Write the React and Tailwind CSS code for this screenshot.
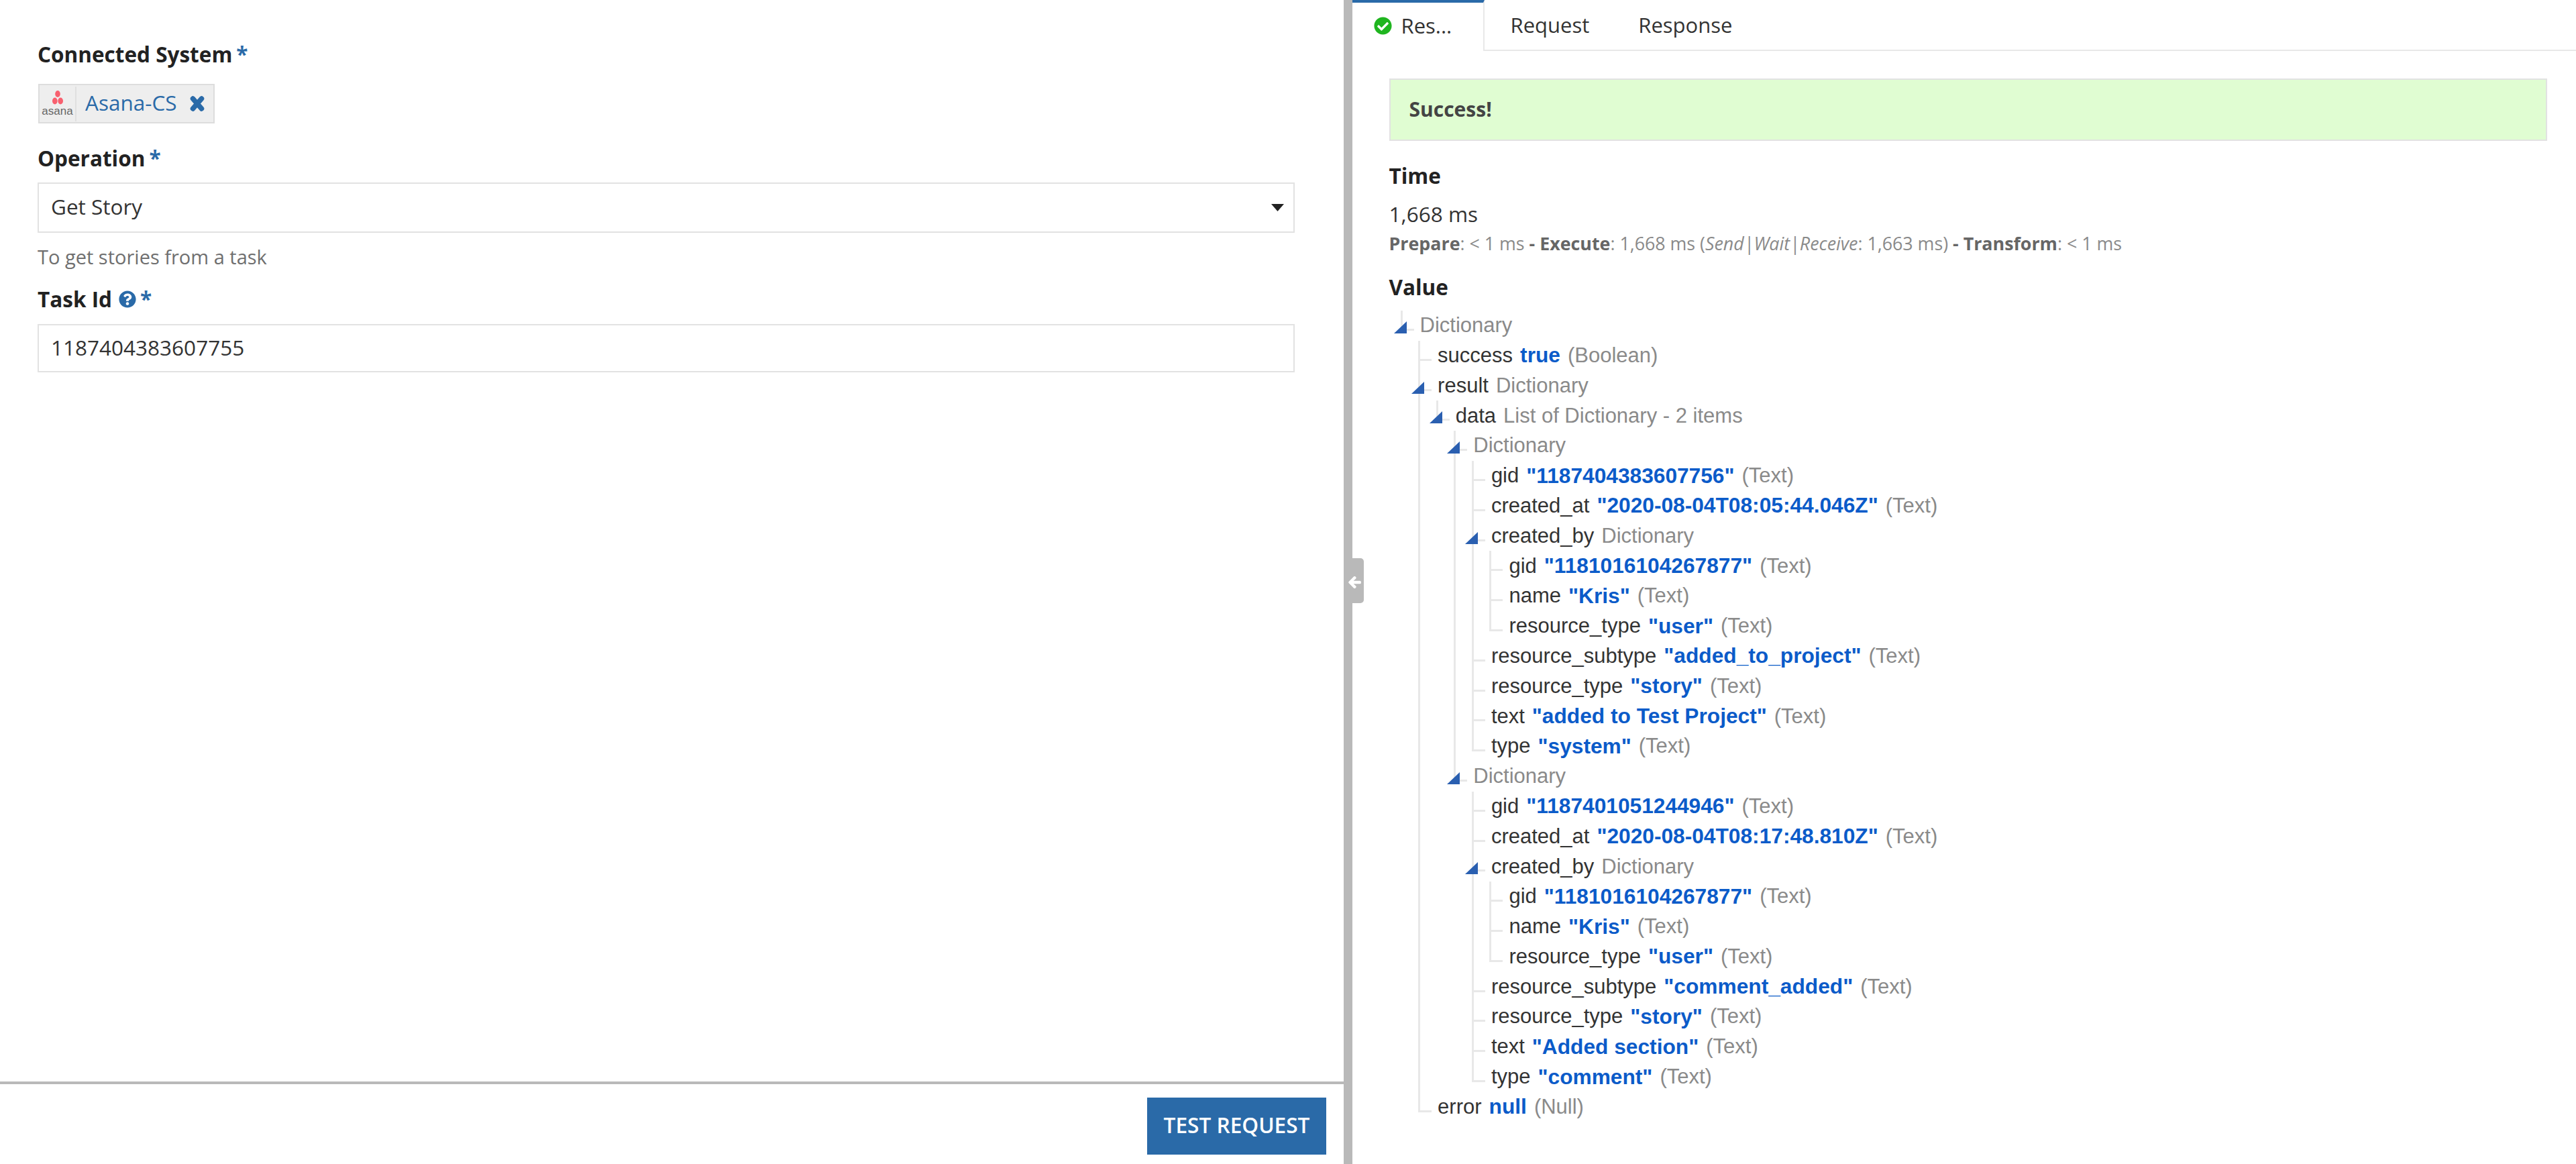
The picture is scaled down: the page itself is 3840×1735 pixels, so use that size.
import React from "react";
import { FaQuestionCircle, FaCheckCircle, FaArrowLeft } from "react-icons/fa";

function Tri() {
  return (
    <svg className="absolute left-[-10px] top-[16px] w-[19px] h-[18px]" viewBox="0 0 19 18">
      <polygon points="19,0 19,18 0,18" fill="#2a5fb0" />
    </svg>
  );
}

function Node({ k, v, t, kids, last }) {
  return (
    <li className="relative">
      <div className={`absolute left-0 top-0 w-[3px] bg-[#e8e8e8] ${last ? "h-[30px]" : "h-full"}`} />
      <div className="absolute left-0 top-[27px] w-[20px] h-[3px] bg-[#e8e8e8]" />
      {kids && <Tri />}
      <div className="h-[44.8px] pl-[29px] flex items-center gap-[11px] whitespace-pre">
        {k && <span className="text-[#333333]">{k}</span>}
        {v && <span className="font-bold text-[31.7px] text-[#0b5bc9]">{v}</span>}
        {t && <span className="text-[#8a8a8a]">{t}</span>}
      </div>
      {kids && (
        <ul className="ml-[26.6px]">
          {kids.map((c, i) => (
            <Node key={i} {...c} last={i === kids.length - 1} />
          ))}
        </ul>
      )}
    </li>
  );
}

const txt = (k, v) => ({ k, v: `"${v}"`, t: "(Text)" });
const story = (gid, at, sub, text, type) => ({
  t: "Dictionary",
  kids: [
    txt("gid", gid),
    txt("created_at", at),
    {
      k: "created_by",
      t: "Dictionary",
      kids: [txt("gid", "1181016104267877"), txt("name", "Kris"), txt("resource_type", "user")],
    },
    txt("resource_subtype", sub),
    txt("resource_type", "story"),
    txt("text", text),
    txt("type", type),
  ],
});

const tree = {
  t: "Dictionary",
  kids: [
    { k: "success", v: "true", t: "(Boolean)" },
    {
      k: "result",
      t: "Dictionary",
      kids: [
        {
          k: "data",
          t: "List of Dictionary - 2 items",
          kids: [
            story("1187404383607756", "2020-08-04T08:05:44.046Z", "added_to_project", "added to Test Project", "system"),
            story("1187401051244946", "2020-08-04T08:17:48.810Z", "comment_added", "Added section", "comment"),
          ],
        },
      ],
    },
    { k: "error", v: "null", t: "(Null)" },
  ],
};

const Star = () => <span className="text-[#2a6aa8] ml-[6px]">*</span>;
const Label = ({ children, className = "" }) => (
  <div className={`h-[44px] pb-[3px] text-[31.5px] font-bold text-[#222222] flex items-center ${className}`}>{children}</div>
);

export default function App() {
  return (
    <div className="w-[3840px] h-[1735px] flex bg-white overflow-hidden font-['Open_Sans',sans-serif] text-[#333333]">
      <div className="w-[2003px] h-full flex flex-col">
        <div className="flex-1 pl-[56px] pr-[73px] pt-[60px]">
          <Label>Connected System<Star /></Label>
          <div className="mt-[21px] ml-[1px] w-[263px] h-[59px] border-2 border-[#dddddd] bg-[#eeeeee] flex items-center">
            <div className="w-[55px] h-[52px] border-r-2 border-[#e0e0e0] flex flex-col items-center justify-center shrink-0">
              <svg className="w-[16px] h-[21px]" viewBox="0 0 16 21">
                <ellipse cx="8" cy="5" rx="3.8" ry="5" fill="#f8606f" />
                <ellipse cx="3.8" cy="15.5" rx="3.8" ry="5" fill="#f8606f" />
                <ellipse cx="12.2" cy="15.5" rx="3.8" ry="5" fill="#f8606f" />
              </svg>
              <span className="text-[17px] leading-[19px] text-[#666666] font-['Liberation_Sans',sans-serif]">asana</span>
            </div>
            <span className="ml-[13px] text-[31.5px] text-[#2a6aa8] pb-[4px]">Asana-CS</span>
            <svg className="ml-[19px] w-[22px] h-[25px]" viewBox="0 0 22 25">
              <path d="M4.5 5 L17.5 20 M17.5 5 L4.5 20" stroke="#2a6aa8" strokeWidth="7.5" strokeLinecap="round" fill="none" />
            </svg>
          </div>
          <Label className="mt-[31px]">Operation<Star /></Label>
          <div className="mt-[13px] h-[75px] border-2 border-[#e2e2e2] pl-[18px] pr-[14px] pb-[4px] flex items-center justify-between text-[31.5px]">
            <span>Get Story</span>
            <svg className="w-[19px] h-[11px] mt-[4px]" viewBox="0 0 19 11"><polygon points="0,0 19,0 9.5,11" fill="#222222" /></svg>
          </div>
          <div className="mt-[15px] h-[44px] pb-[3px] flex items-center text-[29px] text-[#6f6f6f]">To get stories from a task</div>
          <Label className="mt-[19px]">
            Task Id
            <FaQuestionCircle className="ml-[10px] w-[26px] h-[26px] text-[#2a6aa8]" />
            <span className="text-[#2a6aa8] ml-[6px]">*</span>
          </Label>
          <div className="mt-[14px] h-[72px] border-2 border-[#e2e2e2] pl-[18px] pb-[3px] flex items-center text-[31.5px]">1187404383607755</div>
        </div>
        <div className="h-[123px] border-t-4 border-[#b9b9b9] flex justify-end pt-[20px] pr-[26px]">
          <button className="w-[267px] h-[85px] pb-[3px] bg-[#2a6aa8] text-white text-[31.6px] font-semibold">TEST REQUEST</button>
        </div>
      </div>

      <div className="relative w-[12.5px] h-full bg-[#b9b9b9] shrink-0">
        <div className="absolute left-[12px] top-[832px] w-[18px] h-[67px] bg-[#b9b9b9] rounded-r-[5px]" />
        <FaArrowLeft className="absolute left-[6px] top-[858px] w-[21px] h-[20px] text-white" stroke="currentColor" strokeWidth={30} />
      </div>

      <div className="flex-1 min-w-0">
        <div className="h-[76px] flex border-b-2 border-[#e8e8e8] text-[31px]">
          <div className="w-[197px] h-[76px] border-t-4 border-t-[#2a6aa8] border-r-2 border-r-[#e8e8e8] bg-white flex items-center pl-[32px] pb-[3px]">
            <FaCheckCircle className="w-[27px] h-[27px] text-[#1fb51f]" />
            <span className="ml-[14px]">Res...</span>
          </div>
          <div className="flex items-center pl-[39px]">Request</div>
          <div className="flex items-center pl-[73px]">Response</div>
        </div>
        <div className="pl-[55px] pr-[43px]">
          <div className="mt-[41px] h-[93px] pb-[3px] border-2 border-[#e2e2e2] bg-[#e0fdd2] flex items-center pl-[28px] text-[30px] font-bold text-[#444444]">Success!</div>
          <div className="mt-[31px] h-[44px] pb-[3px] flex items-center text-[31.5px] font-bold text-[#222222]">Time</div>
          <div className="mt-[13px] h-[44px] pb-[3px] flex items-center text-[31.5px]">1,668 ms</div>
          <div className="h-[44px] pb-[3px] flex items-center mt-[1px] text-[26.8px] text-[#8a8a8a] whitespace-pre">
            <span>
              <b className="text-[#666666]">Prepare</b>: &lt; 1 ms <b className="text-[#666666]">- Execute</b>: 1,668 ms (<i>Send|Wait|Receive</i>: 1,663 ms) <b className="text-[#666666]">- Transform</b>: &lt; 1 ms
            </span>
          </div>
          <div className="mt-[20px] h-[44px] pb-[3px] flex items-center text-[31.5px] font-bold text-[#222222]">Value</div>
          <ul className="mt-[12px] ml-[17px] text-[31px] font-['Liberation_Sans',sans-serif]">
            <Node {...tree} last />
          </ul>
        </div>
      </div>
    </div>
  );
}
